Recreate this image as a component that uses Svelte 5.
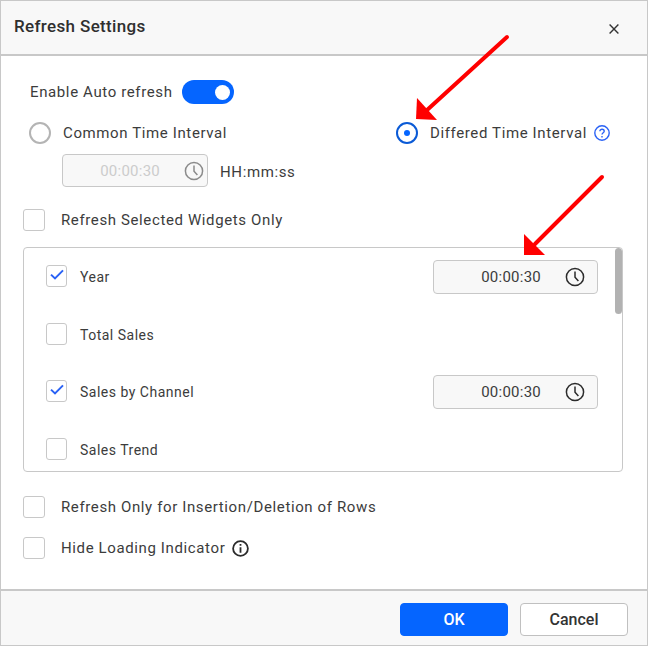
<script>
  const widgets = [
    { name: "Year", checked: true, time: "00:00:30" },
    { name: "Total Sales", checked: false },
    { name: "Sales by Channel", checked: true, time: "00:00:30" },
    { name: "Sales Trend", checked: false }
  ];
</script>

{#snippet clock(size)}
  <svg class="clock" width={size} height={size} viewBox="0 0 20 20" fill="none" stroke="currentColor" stroke-width="1.5">
    <circle cx="10" cy="10" r="8.6" />
    <path d="M10 4.6V10.2L13.4 14" />
  </svg>
{/snippet}

{#snippet box(checked)}
  <span class="check">
    {#if checked}
      <svg width="14" height="12" viewBox="0 0 14 12" fill="none" stroke="#2a62f5" stroke-width="2">
        <path d="M1 5.6L5 9.4L13 1.4" />
      </svg>
    {/if}
  </span>
{/snippet}

<div class="dialog">
  <header class="head">
    <h1>Refresh Settings</h1>
    <svg class="close" width="10" height="10" viewBox="0 0 10 10" stroke="#333" stroke-width="1.4">
      <path d="M.6.6L9.4 9.4M9.4.6L.6 9.4" />
    </svg>
  </header>

  <main class="body">
    <div class="auto">
      <span>Enable Auto refresh</span>
      <span class="toggle"><i></i></span>
    </div>

    <div class="radios">
      <div class="radio-item">
        <span class="radio"></span>
        <span>Common Time Interval</span>
      </div>
      <div class="radio-item differed">
        <span class="radio on"></span>
        <span>Differed Time Interval</span>
        <svg class="help" width="16" height="16" viewBox="0 0 16 16" fill="none" stroke="#2a62f5" stroke-width="1.4">
          <circle cx="8" cy="8" r="7.2" />
          <path d="M5.9 6.2C5.9 3.6 10.2 3.7 10.2 6.2C10.2 7.8 8 7.7 8 9.6" />
          <path d="M8 11V12.4" />
        </svg>
      </div>
    </div>

    <div class="common-time">
      <div class="time disabled">
        <span>00:00:30</span>
        {@render clock(20)}
      </div>
      <span class="fmt">HH:mm:ss</span>
    </div>

    <div class="option first">
      {@render box(false)}
      <span>Refresh Selected Widgets Only</span>
    </div>

    <div class="list">
      <div class="thumb"></div>
      {#each widgets as w}
        <div class="row">
          {@render box(w.checked)}
          <span class="name">{w.name}</span>
          {#if w.time}
            <div class="time">
              <span>{w.time}</span>
              {@render clock(20)}
            </div>
          {/if}
        </div>
      {/each}
    </div>

    <div class="option second">
      {@render box(false)}
      <span>Refresh Only for Insertion/Deletion of Rows</span>
    </div>
    <div class="option third">
      {@render box(false)}
      <span>Hide Loading Indicator</span>
      <svg class="info" width="17" height="17" viewBox="0 0 17 17" fill="none" stroke="#2b2b2b" stroke-width="1.8">
        <circle cx="8.5" cy="8.5" r="7.4" />
        <path d="M8.5 7.2V12.8M8.5 4V5.8" />
      </svg>
    </div>
  </main>

  <footer class="foot">
    <button class="ok">OK</button>
    <button class="cancel">Cancel</button>
  </footer>

  <!-- annotation arrows drawn over the dialog -->
  <svg class="arrows" width="648" height="646" viewBox="0 0 648 646">
    <path d="M507 37L426 111" stroke="#f00" stroke-width="4" stroke-linecap="round" />
    <path d="M416 119L417 98L437 120Z" fill="#f00" />
    <path d="M602 177L535 244" stroke="#f00" stroke-width="4" stroke-linecap="round" />
    <path d="M524 255L524 234L545 255Z" fill="#f00" />
  </svg>
</div>

<style>
  :global(body) {
    margin: 0;
    background: #fff;
  }

  .dialog {
    position: relative;
    box-sizing: border-box;
    width: 648px;
    height: 646px;
    display: flex;
    flex-direction: column;
    border: 1px solid #c8c8c8;
    font-family: Roboto, "Liberation Sans", sans-serif;
    font-size: 15px;
    letter-spacing: 0.62px;
    color: #3c3c3c;
    overflow: hidden;
  }

  .head {
    box-sizing: border-box;
    height: 55px;
    flex: none;
    display: flex;
    align-items: center;
    justify-content: space-between;
    padding: 0 28px 1px 13px;
    background: #f8f8f8;
    border-bottom: 2px solid #c8c8c8;
  }

  h1 {
    margin: 0 0 2px;
    font-size: 17px;
    font-weight: 500;
    letter-spacing: 0.35px;
    color: #2f2f2f;
  }

  .close {
    margin-top: 3px;
  }

  .body {
    flex: 1;
    padding: 24px 24px 0 22px;
    background: #fff;
  }

  .auto {
    display: flex;
    align-items: center;
    gap: 9px;
    height: 24px;
    padding-left: 7px;
  }

  .toggle {
    width: 52px;
    height: 24px;
    box-sizing: border-box;
    border-radius: 12px;
    background: #0565ff;
    display: flex;
    align-items: center;
    justify-content: flex-end;
    padding-right: 4px;
  }

  .toggle i {
    width: 15px;
    height: 15px;
    border-radius: 50%;
    background: #fff;
  }

  .radios {
    display: flex;
    margin-top: 18px;
    height: 22px;
    padding-left: 6px;
  }

  .radio-item {
    display: flex;
    align-items: center;
    gap: 12px;
    width: 367px;
  }

  .differed {
    width: auto;
  }

  .radio {
    box-sizing: border-box;
    width: 22px;
    height: 22px;
    flex: none;
    border-radius: 50%;
    border: 2px solid #b4b4b4;
    display: flex;
    align-items: center;
    justify-content: center;
  }

  .radio.on {
    border-color: #0a5ad6;
  }

  .radio.on::after {
    content: "";
    width: 6px;
    height: 6px;
    border-radius: 50%;
    background: #0565ff;
  }

  .help {
    margin-left: -5px;
  }

  .common-time {
    display: flex;
    align-items: center;
    gap: 12px;
    margin: 10px 0 0 39px;
  }

  .common-time .time {
    width: 146px;
    height: 33px;
    padding-right: 3px;
  }

  .fmt {
    margin-top: 2px;
  }

  .time {
    box-sizing: border-box;
    width: 165px;
    height: 34px;
    display: flex;
    align-items: center;
    justify-content: flex-end;
    gap: 24px;
    padding-right: 12px;
    background: #f8f8f8;
    border: 1px solid #c8c8c8;
    border-radius: 4px;
    letter-spacing: 0.25px;
    color: #3c3c3c;
  }

  .time.disabled {
    color: #ccc;
    gap: 24px;
  }

  .time.disabled .clock {
    color: #8b8b8b;
  }

  .clock {
    color: #2b2b2b;
    flex: none;
  }

  .check {
    box-sizing: border-box;
    width: 22px;
    height: 22px;
    flex: none;
    display: flex;
    align-items: center;
    justify-content: center;
    background: #fff;
    border: 1px solid #c8c8c8;
    border-radius: 3px;
  }

  .check svg {
    margin-bottom: 3px;
  }

  .option {
    display: flex;
    align-items: center;
    gap: 16px;
    height: 22px;
  }

  .first {
    margin-top: 22px;
  }

  .second {
    margin-top: 24px;
  }

  .third {
    margin-top: 19px;
  }

  .info {
    margin-left: -9px;
  }

  .list {
    position: relative;
    box-sizing: border-box;
    width: 600px;
    height: 225px;
    margin-top: 16px;
    padding: 12px 24px 0 22px;
    border: 1px solid #c8c8c8;
    border-radius: 4px;
    overflow: hidden;
  }

  .thumb {
    position: absolute;
    top: 0;
    right: 0;
    width: 7px;
    height: 66px;
    background: #b2b2b2;
    border-radius: 4px;
  }

  .row {
    display: flex;
    align-items: center;
    height: 34px;
    margin-bottom: 23.7px;
    font-size: 14px;
    letter-spacing: 0.5px;
  }

  .row .check {
    width: 21px;
    margin-top: -2px;
  }

  .row .name {
    margin-left: 13px;
    flex: 1;
  }

  .row .time {
    font-size: 15px;
    letter-spacing: 0.25px;
  }

  .foot {
    box-sizing: border-box;
    height: 56px;
    flex: none;
    display: flex;
    justify-content: flex-end;
    align-items: flex-start;
    gap: 12px;
    padding: 12px 19px 0 0;
    background: #f8f8f8;
    border-top: 2px solid #c8c8c8;
  }

  button {
    box-sizing: border-box;
    width: 108px;
    height: 33px;
    border-radius: 4px;
    font-family: inherit;
    font-size: 16px;
    letter-spacing: 0;
    font-weight: 500;
    padding: 0;
  }

  .ok {
    background: #0565ff;
    border: 1px solid #0565ff;
    color: #fff;
  }

  .cancel {
    background: #fff;
    border: 1px solid #c0c0c0;
    color: #333;
  }

  .arrows {
    position: absolute;
    left: -1px;
    top: -1px;
    pointer-events: none;
  }
</style>
